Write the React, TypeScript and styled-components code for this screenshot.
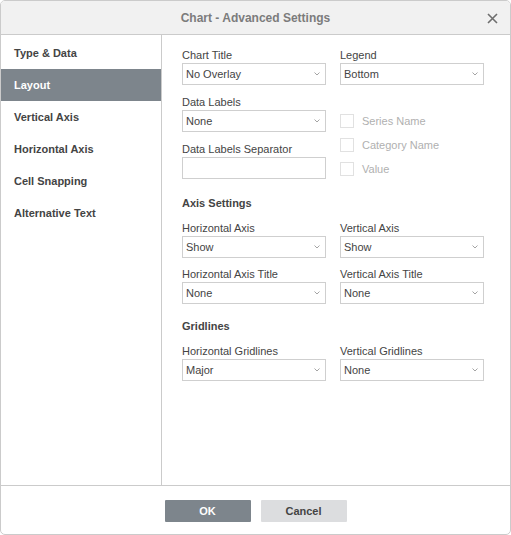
import React from "react";
import styled, { createGlobalStyle } from "styled-components";

const Global = createGlobalStyle`
  html, body { margin: 0; padding: 0; background: #ffffff; }
  * { box-sizing: border-box; }
  body { font-family: "Liberation Sans", Arial, sans-serif; font-size: 11px; color: #444444; }
`;

const Dialog = styled.div`
  width: 511px;
  height: 535px;
  border: 1px solid #cbcbcb;
  border-radius: 5px;
  display: flex;
  flex-direction: column;
  overflow: hidden;
  background: #ffffff;
`;

const Header = styled.div`
  height: 34px;
  flex: none;
  background: #f1f1f1;
  border-bottom: 1px solid #cbcbcb;
  display: flex;
  align-items: center;
  justify-content: center;
  position: relative;
`;

const Title = styled.div`
  font-size: 12px;
  font-weight: bold;
  color: #7c7c7c;
  line-height: 15px;
  padding-top: 1px;
`;

const CloseButton = styled.button`
  position: absolute;
  right: 12px;
  top: 11px;
  width: 12px;
  height: 12px;
  padding: 0;
  border: none;
  background: transparent;
  display: flex;
  align-items: center;
  justify-content: center;
`;

const Body = styled.div`
  flex: 1;
  display: flex;
  min-height: 0;
`;

const Sidebar = styled.div`
  width: 161px;
  flex: none;
  border-right: 1px solid #cbcbcb;
  padding-top: 2px;
  display: flex;
  flex-direction: column;
`;

const NavItem = styled.div<{ $active?: boolean }>`
  height: 32px;
  display: flex;
  align-items: center;
  padding-left: 13px;
  font-weight: bold;
  font-size: 11px;
  color: ${(p) => (p.$active ? "#ffffff" : "#444444")};
  background: ${(p) => (p.$active ? "#7d858c" : "transparent")};
`;

const Content = styled.div`
  flex: 1;
  padding: 13px 0 0 20px;
  display: flex;
  flex-direction: column;
`;

const Section = styled.div<{ $top?: number }>`
  margin-top: ${(p) => p.$top ?? 0}px;
  display: flex;
  flex-direction: column;
`;

const SectionTitle = styled.div`
  font-weight: bold;
  font-size: 11px;
  line-height: 15px;
  color: #444444;
  margin-bottom: 10px;
`;

const Columns = styled.div<{ $rowGap?: number }>`
  display: grid;
  grid-template-columns: 144px 144px;
  column-gap: 14px;
  row-gap: ${(p) => p.$rowGap ?? 10}px;
`;

const Column = styled.div`
  display: flex;
  flex-direction: column;
  gap: 10px;
`;

const Field = styled.div`
  display: flex;
  flex-direction: column;
`;

const Label = styled.div`
  font-size: 11px;
  line-height: 15px;
  height: 15px;
  color: #444444;
  white-space: nowrap;
`;

const SelectBox = styled.div`
  height: 22px;
  border: 1px solid #cfcfcf;
  background: #ffffff;
  display: flex;
  align-items: center;
  justify-content: space-between;
  padding: 0 5px 0 3px;
  font-size: 11px;
  color: #444444;
`;

const TextInput = styled.div`
  height: 22px;
  border: 1px solid #cfcfcf;
  background: #ffffff;
`;

const CheckList = styled.div`
  margin-top: 19px;
  display: flex;
  flex-direction: column;
  gap: 11px;
`;

const CheckRow = styled.div`
  display: flex;
  align-items: center;
  height: 13px;
  gap: 8px;
  color: #b0b0b0;
  font-size: 11px;
`;

const CheckBox = styled.span`
  width: 14px;
  height: 14px;
  border: 1px solid #e1e1e1;
  background: #ffffff;
  flex: none;
`;

const Footer = styled.div`
  height: 49px;
  flex: none;
  border-top: 1px solid #cbcbcb;
  display: flex;
  justify-content: center;
  align-items: flex-start;
  padding-top: 14px;
  gap: 10px;
`;

const Button = styled.button<{ $primary?: boolean }>`
  width: 86px;
  height: 22px;
  border: none;
  border-radius: 1px;
  font-family: "Liberation Sans", Arial, sans-serif;
  font-size: 11px;
  font-weight: bold;
  color: ${(p) => (p.$primary ? "#ffffff" : "#444444")};
  background: ${(p) => (p.$primary ? "#7d858c" : "#dcdddf")};
  padding: 0;
`;

const Chevron = () => (
  <svg width="6" height="4" viewBox="0 0 6 4">
    <polyline points="0.5,0.5 3,3 5.5,0.5" fill="none" stroke="#9a9a9a" strokeWidth="0.9" />
  </svg>
);

const Select = ({ value }: { value: string }) => (
  <SelectBox>
    <span>{value}</span>
    <Chevron />
  </SelectBox>
);

const SelectField = ({ label, value }: { label: string; value: string }) => (
  <Field>
    <Label>{label}</Label>
    <Select value={value} />
  </Field>
);

const nav = ["Type & Data", "Layout", "Vertical Axis", "Horizontal Axis", "Cell Snapping", "Alternative Text"];

export default function App() {
  return (
    <>
      <Global />
      <Dialog>
        <Header>
          <Title>Chart - Advanced Settings</Title>
          <CloseButton aria-label="Close">
            <svg width="11" height="11" viewBox="0 0 11 11">
              <path d="M1 1 L10 10 M10 1 L1 10" stroke="#6e6e6e" strokeWidth="1.6" fill="none" />
            </svg>
          </CloseButton>
        </Header>
        <Body>
          <Sidebar>
            {nav.map((n) => (
              <NavItem key={n} $active={n === "Layout"}>
                {n}
              </NavItem>
            ))}
          </Sidebar>
          <Content>
            <Section>
              <Columns>
                <Column>
                  <SelectField label="Chart Title" value="No Overlay" />
                  <SelectField label="Data Labels" value="None" />
                  <Field>
                    <Label>Data Labels Separator</Label>
                    <TextInput />
                  </Field>
                </Column>
                <Column>
                  <SelectField label="Legend" value="Bottom" />
                  <CheckList>
                    <CheckRow>
                      <CheckBox />
                      Series Name
                    </CheckRow>
                    <CheckRow>
                      <CheckBox />
                      Category Name
                    </CheckRow>
                    <CheckRow>
                      <CheckBox />
                      Value
                    </CheckRow>
                  </CheckList>
                </Column>
              </Columns>
            </Section>
            <Section $top={17}>
              <SectionTitle>Axis Settings</SectionTitle>
              <Columns $rowGap={9}>
                <SelectField label="Horizontal Axis" value="Show" />
                <SelectField label="Vertical Axis" value="Show" />
                <SelectField label="Horizontal Axis Title" value="None" />
                <SelectField label="Vertical Axis Title" value="None" />
              </Columns>
            </Section>
            <Section $top={15}>
              <SectionTitle>Gridlines</SectionTitle>
              <Columns>
                <SelectField label="Horizontal Gridlines" value="Major" />
                <SelectField label="Vertical Gridlines" value="None" />
              </Columns>
            </Section>
          </Content>
        </Body>
        <Footer>
          <Button $primary>OK</Button>
          <Button>Cancel</Button>
        </Footer>
      </Dialog>
    </>
  );
}
